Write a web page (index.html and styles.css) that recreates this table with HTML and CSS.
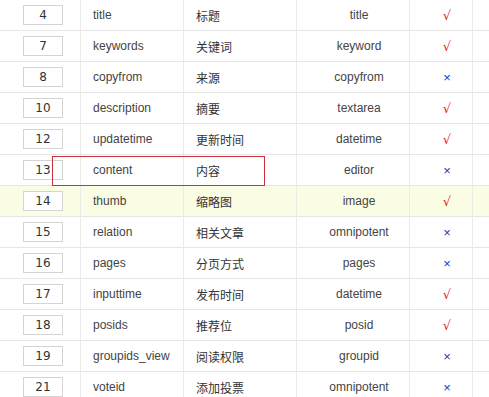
FILE: index.html
```html
<!DOCTYPE html>
<html>
<head>
<meta charset="utf-8">
<link rel="stylesheet" href="styles.css">
</head>
<body>
<div class="table">
  <div class="row"><div class="c c1"><span class="box">4</span></div><div class="c c2">title</div><div class="c c3">标题</div><div class="c c4">title</div><div class="c c5"><span class="yes">√</span></div><div class="c c6"></div></div>
  <div class="row"><div class="c c1"><span class="box">7</span></div><div class="c c2">keywords</div><div class="c c3">关键词</div><div class="c c4">keyword</div><div class="c c5"><span class="yes">√</span></div><div class="c c6"></div></div>
  <div class="row"><div class="c c1"><span class="box">8</span></div><div class="c c2">copyfrom</div><div class="c c3">来源</div><div class="c c4">copyfrom</div><div class="c c5"><span class="no">×</span></div><div class="c c6"></div></div>
  <div class="row"><div class="c c1"><span class="box">10</span></div><div class="c c2">description</div><div class="c c3">摘要</div><div class="c c4">textarea</div><div class="c c5"><span class="yes">√</span></div><div class="c c6"></div></div>
  <div class="row"><div class="c c1"><span class="box">12</span></div><div class="c c2">updatetime</div><div class="c c3">更新时间</div><div class="c c4">datetime</div><div class="c c5"><span class="yes">√</span></div><div class="c c6"></div></div>
  <div class="row marked"><div class="c c1"><span class="box">13</span></div><div class="c c2">content</div><div class="c c3">内容</div><div class="c c4">editor</div><div class="c c5"><span class="no">×</span></div><div class="c c6"></div><div class="redbox"></div></div>
  <div class="row hover"><div class="c c1"><span class="box">14</span></div><div class="c c2">thumb</div><div class="c c3">缩略图</div><div class="c c4">image</div><div class="c c5"><span class="yes">√</span></div><div class="c c6"></div></div>
  <div class="row"><div class="c c1"><span class="box">15</span></div><div class="c c2">relation</div><div class="c c3">相关文章</div><div class="c c4">omnipotent</div><div class="c c5"><span class="no">×</span></div><div class="c c6"></div></div>
  <div class="row"><div class="c c1"><span class="box">16</span></div><div class="c c2">pages</div><div class="c c3">分页方式</div><div class="c c4">pages</div><div class="c c5"><span class="no">×</span></div><div class="c c6"></div></div>
  <div class="row"><div class="c c1"><span class="box">17</span></div><div class="c c2">inputtime</div><div class="c c3">发布时间</div><div class="c c4">datetime</div><div class="c c5"><span class="yes">√</span></div><div class="c c6"></div></div>
  <div class="row"><div class="c c1"><span class="box">18</span></div><div class="c c2">posids</div><div class="c c3">推荐位</div><div class="c c4">posid</div><div class="c c5"><span class="yes">√</span></div><div class="c c6"></div></div>
  <div class="row"><div class="c c1"><span class="box">19</span></div><div class="c c2">groupids_view</div><div class="c c3">阅读权限</div><div class="c c4">groupid</div><div class="c c5"><span class="no">×</span></div><div class="c c6"></div></div>
  <div class="row"><div class="c c1"><span class="box">21</span></div><div class="c c2">voteid</div><div class="c c3">添加投票</div><div class="c c4">omnipotent</div><div class="c c5"><span class="no">×</span></div><div class="c c6"></div></div>
</div>
</body>
</html>
```
FILE: styles.css
```css
html, body {
  margin: 0;
  padding: 0;
  background: #fff;
  overflow: hidden;
}
body {
  font-family: "Liberation Sans", "Noto Sans CJK SC", sans-serif;
  font-size: 12px;
  color: #444;
}
.table {
  display: flex;
  flex-direction: column;
}
.row {
  position: relative;
  display: grid;
  grid-template-columns: 81px 103px 113px 113px 63px 1fr;
  height: 31px;
  border-bottom: 1px solid #e6e6e6;
  box-sizing: border-box;
}
.row.hover {
  background: #fbfce4;
}
.c {
  border-right: 1px solid #ebebeb;
  display: flex;
  align-items: center;
  box-sizing: border-box;
}
.c6 { border-right: none; }
.c1 {
  padding-left: 23px;
}
.c2, .c3 {
  padding-left: 12px;
}
.c3 {
  font-family: "Noto Sans CJK SC", sans-serif;
  font-size: 12px;
  color: #333;
}
.c4, .c5 {
  justify-content: center;
  padding-left: 12px;
}
.box {
  display: flex;
  align-items: center;
  justify-content: center;
  width: 40px;
  height: 20px;
  box-sizing: border-box;
  border: 1px solid #d4d4d4;
  background: #fff;
  font-family: "DejaVu Sans", sans-serif;
  font-size: 12px;
  color: #333;
}
.yes {
  color: #e31b1b;
  font-size: 13px;
  font-family: "DejaVu Sans", sans-serif;
}
.no {
  color: #2a36c4;
  font-size: 13px;
  font-family: "Liberation Sans", sans-serif;
}
.redbox {
  position: absolute;
  left: 52px;
  top: 1px;
  width: 213px;
  height: 30px;
  border: 1px solid #c8323c;
  box-sizing: border-box;
  pointer-events: none;
}
```
